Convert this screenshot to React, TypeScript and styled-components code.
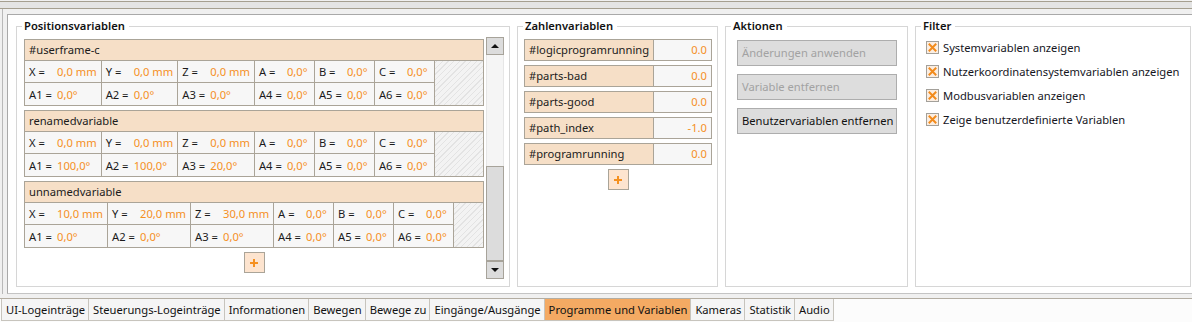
import React from 'react';
import styled, { createGlobalStyle } from 'styled-components';

const GlobalStyle = createGlobalStyle`
  html, body { margin: 0; padding: 0; }
  body {
    background: #f0f0f0;
    font-family: "Noto Sans", "Open Sans", sans-serif;
    font-size: 11.2px;
    color: #1b1b1b;
  }
  * { box-sizing: border-box; }
`;

const LINE = '#aaa498';
const PEACH = '#f6dfc7';
const ORANGE = '#f5901f';

const Root = styled.div`
  width: 1192px;
  height: 322px;
  display: flex;
  flex-direction: column;
  overflow: hidden;
`;

const TopStrip = styled.div`
  margin-top: 1px;
  height: 8px;
  background: #e4e4e4;
  border-top: 1px solid #a59f90;
  border-bottom: 1px solid #a59f90;
`;

const Frame = styled.div`
  margin-left: 2px;
  border-left: 1px solid #b9b9b9;
  padding: 5px 0 0 4px;
`;

const Panel = styled.div`
  height: 280px;
  background: #fff;
  border-top: 1px solid #a9a9a9;
  border-left: 1px solid #a9a9a9;
  border-bottom: 1px solid #c4c4c4;
  padding: 3px 1px 6px 8px;
  display: flex;
  gap: 7px;
`;

const Group = styled.fieldset<{ $width?: number }>`
  margin: 0;
  padding: 3px 0 0 0;
  min-width: 0;
  border: 1px solid #d6d6d6;
  display: flex;
  flex-direction: column;
  ${p => (p.$width ? `width: ${p.$width}px; flex: none;` : 'flex: 1;')}
`;

const Legend = styled.legend`
  margin-left: 5px;
  padding: 0 4px 0 2px;
  font-weight: 600;
  line-height: 16px;
  color: #111;
`;

/* ---------- Positionsvariablen ---------- */

const PosBody = styled.div`
  flex: 1;
  min-height: 0;
  display: flex;
  gap: 2px;
  padding: 0 5px 7px 7px;
`;

const PosList = styled.div`
  flex: 1;
  display: flex;
  flex-direction: column;
  align-items: stretch;
  gap: 4px;
  padding-top: 2px;
`;

const Card = styled.div`
  border: 1px solid ${LINE};
`;

const CardHeader = styled.div`
  height: 21px;
  line-height: 20px;
  background: ${PEACH};
  border-bottom: 1px solid ${LINE};
  padding-left: 4px;
`;

const CardGrid = styled.div`
  display: grid;
  grid-template-columns: repeat(3, minmax(76px, max-content)) repeat(3, minmax(60px, max-content)) 1fr;
  grid-auto-rows: 22px;
  background: #f7f7f7;
`;

const Cell = styled.div<{ $top?: boolean }>`
  display: flex;
  align-items: center;
  padding: 0 4px 0 4px;
  border-right: 1px solid ${LINE};
  white-space: nowrap;
  ${p => (p.$top ? `border-bottom: 1px solid ${LINE};` : '')}
`;

const CellLabel = styled.span`
  min-width: 28px;
`;

const Value = styled.span`
  color: ${ORANGE};
`;

const Hatch = styled.div`
  grid-row: 1 / span 2;
  grid-column: 7;
  background: repeating-linear-gradient(
    -45deg,
    #f3f3f3 0px,
    #f3f3f3 3px,
    #e3e3e3 3px,
    #e3e3e3 4px
  );
`;

const PlusButton = styled.button`
  align-self: center;
  width: 21px;
  height: 21px;
  padding: 0;
  margin: 0;
  background: #fde4cf;
  border: 1px solid ${LINE};
  display: flex;
  align-items: center;
  justify-content: center;
`;

const ScrollBar = styled.div`
  width: 18px;
  flex: none;
  display: flex;
  flex-direction: column;
  background: #f5f5f5;
  border-left: 1px solid #e6e6e6;
  border-right: 1px solid #e6e6e6;
`;

const ScrollButton = styled.div`
  height: 18px;
  margin: 0 -1px;
  background: #dcdcdc;
  border: 1px solid #a7a39a;
  display: flex;
  align-items: center;
  justify-content: center;
`;

const Track = styled.div`
  flex: 1;
  display: flex;
  flex-direction: column;
  justify-content: flex-end;
`;

const Thumb = styled.div`
  height: 95px;
  margin: 0 -1px;
  background: #dcdcdc;
  border: 1px solid #a7a39a;
`;

/* ---------- Zahlenvariablen ---------- */

const NumBody = styled.div`
  display: flex;
  flex-direction: column;
  gap: 4px;
  padding: 2px 5px 0 6px;
`;

const NumRow = styled.div`
  height: 22px;
  display: grid;
  grid-template-columns: 1fr 57px;
  border: 1px solid ${LINE};
`;

const NumName = styled.div`
  background: ${PEACH};
  border-right: 1px solid ${LINE};
  padding-left: 4px;
  line-height: 20px;
  white-space: nowrap;
`;

const NumValue = styled.div`
  background: #f7f7f7;
  color: ${ORANGE};
  text-align: right;
  padding-right: 4px;
  line-height: 20px;
`;

/* ---------- Aktionen ---------- */

const ActionBody = styled.div`
  display: flex;
  flex-direction: column;
  gap: 8px;
  padding: 3px 10px 0 11px;
`;

const ActionButton = styled.button<{ $disabled?: boolean }>`
  height: 26px;
  margin: 0;
  padding: 0 0 1px 4px;
  text-align: left;
  font: inherit;
  background: #dddddd;
  border: 1px solid #adadad;
  color: ${p => (p.$disabled ? '#a2a2a2' : '#111')};
  white-space: nowrap;
`;

/* ---------- Filter ---------- */

const FilterBody = styled.div`
  display: flex;
  flex-direction: column;
  gap: 4px;
  padding: 0 0 0 10px;
`;

const CheckRow = styled.label`
  height: 20px;
  display: flex;
  align-items: center;
  gap: 4px;
  white-space: nowrap;
  color: #16161e;
`;

/* ---------- Tabs ---------- */

const TabBar = styled.div`
  margin-top: 4px;
  flex: 1;
  border-top: 1px solid #b3ada2;
  background: #fcfcfc;
  display: flex;
  align-items: flex-start;
  padding-left: 1px;
`;

const Tab = styled.div<{ $active?: boolean }>`
  height: 22px;
  line-height: 21px;
  padding: 0 3px 0 4px;
  white-space: nowrap;
  background: ${p => (p.$active ? '#f4aa63' : '#f5f5f5')};
  border-right: 1px solid #c7c4bd;
  border-bottom: 1px solid #c7c4bd;
  &:first-child { border-left: 1px solid #c7c4bd; }
  color: #111;
`;

/* ---------- icons ---------- */

const PlusIcon = () => (
  <svg width="8" height="8" viewBox="0 0 8 8">
    <rect x="0" y="3" width="8" height="2" fill={ORANGE} />
    <rect x="3" y="0" width="2" height="8" fill={ORANGE} />
  </svg>
);

const Arrow = ({ up }: { up?: boolean }) => (
  <svg width="8" height="4" viewBox="0 0 8 4">
    <path d={up ? 'M0 4 L4 0 L8 4 Z' : 'M0 0 L8 0 L4 4 Z'} fill="#111" />
  </svg>
);

const CheckIcon = () => (
  <svg width="13" height="13" viewBox="0 0 13 13">
    <rect x="0.5" y="0.5" width="12" height="12" fill="#fbeee2" stroke="#a3a09a" />
    <path d="M2.8 2.8 L10.2 10.2 M10.2 2.8 L2.8 10.2" stroke="#f28b1c" strokeWidth="2" />
  </svg>
);

/* ---------- data ---------- */

type PosVar = { name: string; pose: string[]; joints: string[] };

const z = '0,0°';
const posVars: PosVar[] = [
  { name: '#userframe-c', pose: ['0,0 mm', '0,0 mm', '0,0 mm', z, z, z], joints: [z, z, z, z, z, z] },
  { name: 'renamedvariable', pose: ['0,0 mm', '0,0 mm', '0,0 mm', z, z, z], joints: ['100,0°', '100,0°', '20,0°', z, z, z] },
  { name: 'unnamedvariable', pose: ['10,0 mm', '20,0 mm', '30,0 mm', z, z, z], joints: [z, z, z, z, z, z] },
];

const poseLabels = ['X =', 'Y =', 'Z =', 'A =', 'B =', 'C ='];
const jointLabels = ['A1 =', 'A2 =', 'A3 =', 'A4 =', 'A5 =', 'A6 ='];

const numVars = [
  ['#logicprogramrunning', '0.0'],
  ['#parts-bad', '0.0'],
  ['#parts-good', '0.0'],
  ['#path_index', '-1.0'],
  ['#programrunning', '0.0'],
];

const actions = [
  { label: 'Änderungen anwenden', disabled: true },
  { label: 'Variable entfernen', disabled: true },
  { label: 'Benutzervariablen entfernen', disabled: false },
];

const filters = [
  'Systemvariablen anzeigen',
  'Nutzerkoordinatensystemvariablen anzeigen',
  'Modbusvariablen anzeigen',
  'Zeige benutzerdefinierte Variablen',
];

const tabs = [
  'UI-Logeinträge',
  'Steuerungs-Logeinträge',
  'Informationen',
  'Bewegen',
  'Bewege zu',
  'Eingänge/Ausgänge',
  'Programme und Variablen',
  'Kameras',
  'Statistik',
  'Audio',
];

const PositionCard = ({ v }: { v: PosVar }) => (
  <Card>
    <CardHeader>{v.name}</CardHeader>
    <CardGrid>
      {v.pose.map((val, i) => (
        <Cell key={'p' + i} $top style={{ gridRow: 1, gridColumn: i + 1 }}>
          <CellLabel>{poseLabels[i]}</CellLabel>
          <Value>{val}</Value>
        </Cell>
      ))}
      {v.joints.map((val, i) => (
        <Cell key={'j' + i} style={{ gridRow: 2, gridColumn: i + 1 }}>
          <CellLabel>{jointLabels[i]}</CellLabel>
          <Value>{val}</Value>
        </Cell>
      ))}
      <Hatch />
    </CardGrid>
  </Card>
);

export default function App() {
  return (
    <Root>
      <GlobalStyle />
      <TopStrip />
      <Frame>
        <Panel>
          <Group $width={494}>
            <Legend>Positionsvariablen</Legend>
            <PosBody>
              <PosList>
                {posVars.map(v => (
                  <PositionCard key={v.name} v={v} />
                ))}
                <PlusButton>
                  <PlusIcon />
                </PlusButton>
              </PosList>
              <ScrollBar>
                <ScrollButton>
                  <Arrow up />
                </ScrollButton>
                <Track>
                  <Thumb />
                </Track>
                <ScrollButton>
                  <Arrow />
                </ScrollButton>
              </ScrollBar>
            </PosBody>
          </Group>

          <Group $width={201}>
            <Legend>Zahlenvariablen</Legend>
            <NumBody>
              {numVars.map(([n, v]) => (
                <NumRow key={n}>
                  <NumName>{n}</NumName>
                  <NumValue>{v}</NumValue>
                </NumRow>
              ))}
              <PlusButton>
                <PlusIcon />
              </PlusButton>
            </NumBody>
          </Group>

          <Group $width={183}>
            <Legend>Aktionen</Legend>
            <ActionBody>
              {actions.map(a => (
                <ActionButton key={a.label} $disabled={a.disabled}>
                  {a.label}
                </ActionButton>
              ))}
            </ActionBody>
          </Group>

          <Group>
            <Legend>Filter</Legend>
            <FilterBody>
              {filters.map(f => (
                <CheckRow key={f}>
                  <CheckIcon />
                  <span>{f}</span>
                </CheckRow>
              ))}
            </FilterBody>
          </Group>
        </Panel>
      </Frame>
      <TabBar>
        {tabs.map(t => (
          <Tab key={t} $active={t === 'Programme und Variablen'}>
            {t}
          </Tab>
        ))}
      </TabBar>
    </Root>
  );
}
